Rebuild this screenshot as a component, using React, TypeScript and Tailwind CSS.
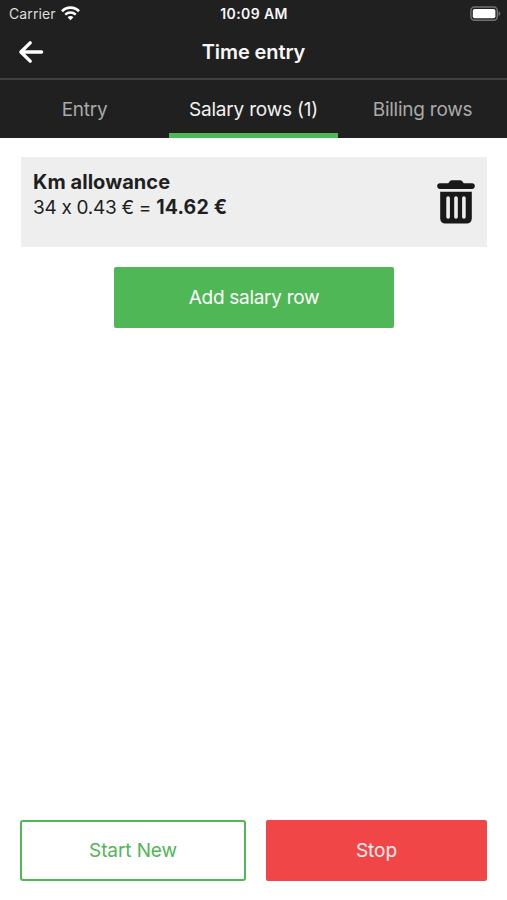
import { useState } from "react";

const tabs = [
  { id: "entry", label: "Entry" },
  { id: "salary", label: "Salary rows (1)" },
  { id: "billing", label: "Billing rows" },
];

function WifiIcon() {
  return (
    <svg width="19" height="15" viewBox="0 0 19 15" fill="none">
      <path d="M1 5.2C5.7 0.5 13.3 0.5 18 5.2" stroke="white" strokeWidth="2.7" />
      <path d="M4.2 8.6C7.2 5.8 11.8 5.8 14.8 8.6" stroke="white" strokeWidth="2.3" />
      <path d="M6.6 11.2C8.2 9.6 10.8 9.6 12.4 11.2L9.5 14.2Z" fill="white" />
    </svg>
  );
}

function BatteryIcon() {
  return (
    <svg width="31" height="16" viewBox="0 0 31 16" fill="none">
      <rect x="0.9" y="1" width="26.4" height="13.2" rx="3.6" stroke="#727272" strokeWidth="1.4" />
      <rect x="2.8" y="2.9" width="22.6" height="9.4" rx="1.8" fill="white" />
      <path d="M28.6 5.3C30.8 6.1 30.8 9.1 28.6 9.9Z" fill="#727272" />
    </svg>
  );
}

function BackIcon() {
  return (
    <svg width="26" height="24" viewBox="0 0 26 24" fill="none">
      <path
        d="M12.2 2.9L2.9 12L12.2 21.1M3.4 12H23.6"
        stroke="white"
        strokeWidth="3.4"
        strokeLinecap="round"
        strokeLinejoin="round"
      />
    </svg>
  );
}

function TrashIcon() {
  return (
    <svg width="38" height="44" viewBox="0 0 38 44" fill="none">
      <path
        d="M3 3.3H11.2L13 1.1Q13.7 0.3 14.8 0.3H23.2Q24.3 0.3 25 1.1L26.8 3.3H35A2.8 2.8 0 0 1 35 8.9H3A2.8 2.8 0 0 1 3 3.3Z"
        fill="#191919"
      />
      <path d="M3.2 11.7H34.8V38.6A5 5 0 0 1 29.8 43.6H8.2A5 5 0 0 1 3.2 38.6Z" fill="#191919" />
      <path
        d="M11.1 18V37M19 18V37M26.9 18V37"
        stroke="#eeeeee"
        strokeWidth="3.6"
        strokeLinecap="round"
      />
    </svg>
  );
}

export default function App() {
  const [active, setActive] = useState("salary");

  return (
    <main className="flex h-screen w-full flex-col bg-white font-['Inter',sans-serif] text-[#1f1f1f] [font-feature-settings:'calt'_0]">
      {/* Header */}
      <header className="bg-[#202020] text-[#f7f7f7]">
        <div className="grid h-[26px] grid-cols-3 items-center pl-[9px] pr-[6px] pt-px">
          <div className="flex items-center gap-[5px]">
            <span className="text-[14px] tracking-[0.1px] text-[#dddddd]">Carrier</span>
            <WifiIcon />
          </div>
          <span className="-ml-0.5 text-center text-[14px] font-semibold tracking-[0.4px]">
            10:09 AM
          </span>
          <div className="flex justify-end">
            <BatteryIcon />
          </div>
        </div>

        <div className="grid h-[52px] grid-cols-[60px_1fr_60px] items-center">
          <button className="ml-[18px]" aria-label="Back">
            <BackIcon />
          </button>
          <h1 className="text-center text-[20px] font-semibold tracking-[-0.1px]">Time entry</h1>
        </div>

        {/* Tabs */}
        <nav className="grid h-[60px] grid-cols-3 border-t-2 border-[#404040]">
          {tabs.map((tab) => (
            <button
              key={tab.id}
              onClick={() => setActive(tab.id)}
              className={
                active === tab.id
                  ? "border-b-[5px] border-[#4fb755] pt-[7px] text-[19px] tracking-[-0.2px] text-[#f2f2f2]"
                  : "border-b-[5px] border-transparent pt-[7px] text-[19px] tracking-[-0.25px] text-[#a9a9a9]"
              }
            >
              {tab.label}
            </button>
          ))}
        </nav>
      </header>

      {/* Rows */}
      <section className="flex flex-1 flex-col items-center pl-[21px] pr-5 pt-[19px]">
        <div className="flex h-[90px] w-full items-start justify-between bg-[#eeeeee] pl-3 pr-3">
          <div className="pt-[13px] text-[19px] leading-6">
            <h2 className="text-[20px] font-bold tracking-[0.05px]">Km allowance</h2>
            <p className="pt-px tracking-[-0.3px]">
              34 x 0.43 € ={" "}
              <b className="text-[19.5px] font-bold tracking-[0.2px]">14.62 €</b>
            </p>
          </div>
          <button className="mt-[23px]" aria-label="Delete row">
            <TrashIcon />
          </button>
        </div>

        <button className="mt-5 h-[61px] w-[280px] rounded-[2px] bg-[#4fb755] pt-0.5 text-[19px] tracking-[-0.3px] text-white">
          Add salary row
        </button>
      </section>

      {/* Actions */}
      <footer className="flex gap-5 px-5 pb-[19px]">
        <button className="h-[61px] w-[226px] rounded-[3px] border-2 border-[#4fb755] pt-0.5 text-[19px] tracking-[-0.1px] text-[#4fb755]">
          Start New
        </button>
        <button className="h-[61px] flex-1 rounded-[2px] bg-[#f14648] pt-0.5 text-[19px] text-[#fff0f0]">
          Stop
        </button>
      </footer>
    </main>
  );
}
